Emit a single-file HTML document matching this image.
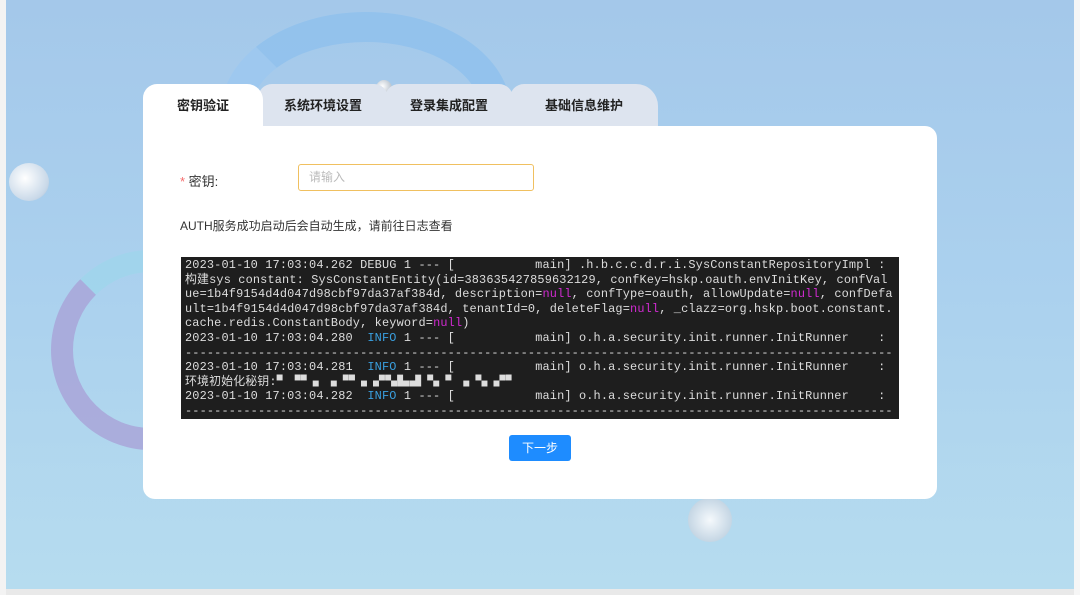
<!DOCTYPE html>
<html><head><meta charset="utf-8"><style>
*{margin:0;padding:0;box-sizing:border-box}
body{width:1080px;height:595px;overflow:hidden;position:relative;background:#e9e9e9;font-family:"Liberation Sans","Noto Sans CJK SC",sans-serif}
.win{position:absolute;left:6px;top:0;width:1068px;height:589px;background:linear-gradient(180deg,#a4c8ea 0%,#abd1ee 50%,#b6dcef 100%);overflow:hidden}
.lstrip{position:absolute;left:0;top:0;width:6px;height:595px;background:#f3f3f3}
.rstrip{position:absolute;left:1074px;top:0;width:6px;height:595px;background:#f6f6f6}
.abs{position:absolute}
.tab{position:absolute;top:84px;height:44px;background:#dde4ef;border-radius:14px 14px 0 0;font-size:13px;font-weight:bold;color:#222;text-align:center;line-height:44px}
.card{position:absolute;left:143px;top:126px;width:794px;height:373px;background:#fff;border-radius:0 12px 12px 12px}
.term{position:absolute;left:181px;top:257px;width:718px;height:162px;background:#1e1e1e;color:#ddd;font-family:"Liberation Mono","Noto Sans CJK SC",monospace;font-size:11.9px;line-height:14.6px;padding:1px 0 0 4px;white-space:pre;overflow:hidden;letter-spacing:0.16px}
.n{color:#d02ad0}.i{color:#3aa0e0}
</style></head><body>
<div class="lstrip"></div><div class="rstrip"></div>
<div class="win">
 <div class="abs" style="left:215px;top:12px;width:290px;height:200px;border:30px solid #8cc0ee;border-bottom-color:transparent;border-left-color:#9cc8f2;border-radius:50%;opacity:.7"></div>
 <div class="abs" style="left:45px;top:250px;width:200px;height:200px;border:22px solid #a9a3d8;border-right-color:transparent;border-top-color:#9fd6ec;border-radius:50%;opacity:.8"></div>
 <div class="abs" style="left:3px;top:163px;width:40px;height:38px;border-radius:50%;background:radial-gradient(circle at 40% 40%,#fff,#c8d8e8 70%,#9fb4ca)"></div>
 <div class="abs" style="left:682px;top:498px;width:44px;height:44px;border-radius:50%;background:radial-gradient(circle at 50% 50%,#f5f9fc,#c5d6e4 70%,#a8bccc)"></div>
 <div class="abs" style="left:370px;top:80px;width:16px;height:16px;border-radius:50%;background:radial-gradient(circle at 40% 40%,#fff,#9aa8b8)"></div>
</div>
<div class="tab" style="left:258px;width:130px">系统环境设置</div>
<div class="tab" style="left:385px;width:128px">登录集成配置</div>
<div class="tab" style="left:510px;width:148px;border-radius:14px 22px 0 0">基础信息维护</div>
<div class="tab" style="left:143px;width:120px;background:#fff;border-radius:14px 16px 0 0;line-height:44px">密钥验证</div>
<div class="card">
 <div class="abs" style="left:37px;top:45px;font-size:13px;color:#333"><span style="color:#f56c6c">*</span> 密钥:</div>
 <div class="abs" style="left:155px;top:38px;width:236px;height:27px;border:1px solid #f0c060;border-radius:3px;font-size:12px;color:#bbb;line-height:25px;padding-left:10px">请输入</div>
 <div class="abs" style="left:37px;top:91px;font-size:12px;color:#333">AUTH服务成功启动后会自动生成，请前往日志查看</div>
 <div class="abs" style="left:366px;top:309px;width:62px;height:26px;background:#1e8cff;border-radius:3px;color:#fff;font-size:12px;text-align:center;line-height:26px">下一步</div>
</div>
<div class="term">2023-01-10 17:03:04.262 DEBUG 1 --- [           main] .h.b.c.c.d.r.i.SysConstantRepositoryImpl :
构建sys constant: SysConstantEntity(id=383635427859632129, confKey=hskp.oauth.envInitKey, confVal
ue=1b4f9154d4d047d98cbf97da37af384d, description=<span class="n">null</span>, confType=oauth, allowUpdate=<span class="n">null</span>, confDefa
ult=1b4f9154d4d047d98cbf97da37af384d, tenantId=0, deleteFlag=<span class="n">null</span>, _clazz=org.hskp.boot.constant.
cache.redis.ConstantBody, keyword=<span class="n">null</span>)
2023-01-10 17:03:04.280  <span class="i">INFO</span> 1 --- [           main] o.h.a.security.init.runner.InitRunner    :
-------------------------------------------------------------------------------------------------
2023-01-10 17:03:04.281  <span class="i">INFO</span> 1 --- [           main] o.h.a.security.init.runner.InitRunner    :
环境初始化秘钥:▘▝▘▖▗▝▘▖▞▚▙▟▝▖▘▗▝▖▞▘
2023-01-10 17:03:04.282  <span class="i">INFO</span> 1 --- [           main] o.h.a.security.init.runner.InitRunner    :
-------------------------------------------------------------------------------------------------</div>
</body></html>
